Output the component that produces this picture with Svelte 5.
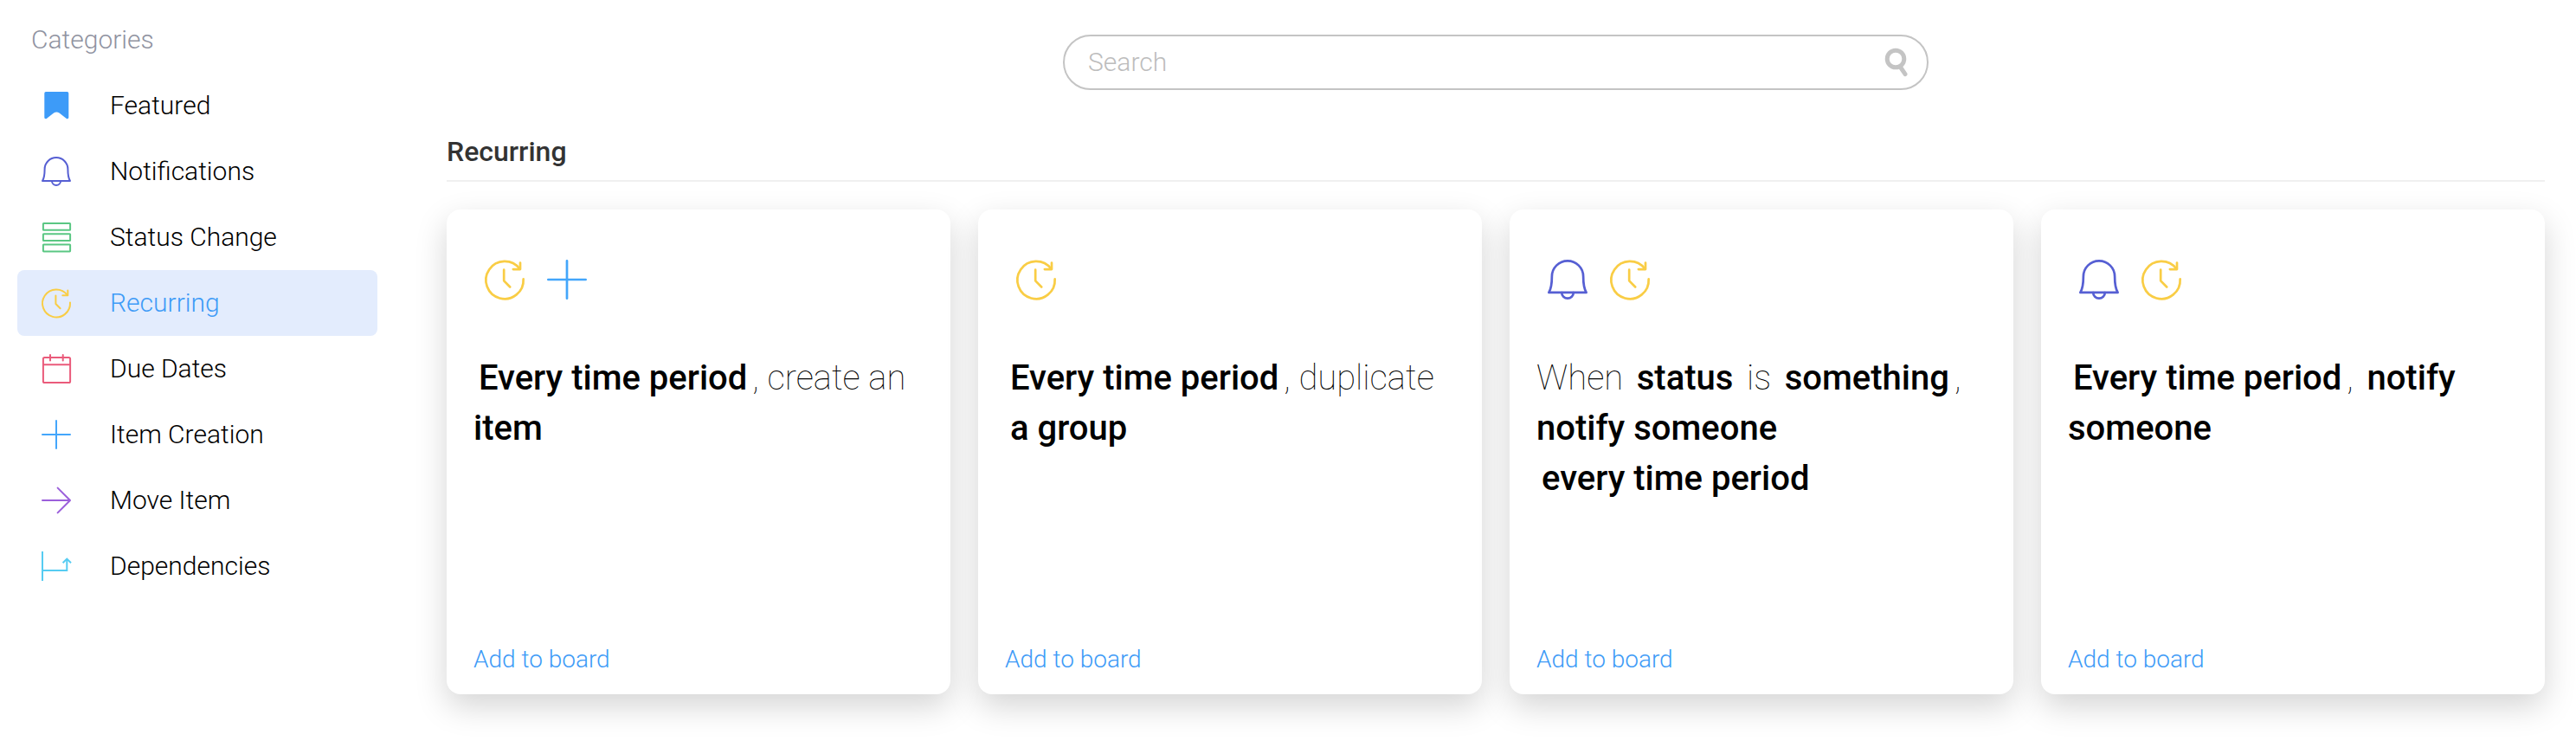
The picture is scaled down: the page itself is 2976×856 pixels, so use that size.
<script>
	let search = $state('');
	let selected = $state('Recurring');

	const categories = [
		{ label: 'Featured', icon: 'bookmark' },
		{ label: 'Notifications', icon: 'bell' },
		{ label: 'Status Change', icon: 'status' },
		{ label: 'Recurring', icon: 'clock' },
		{ label: 'Due Dates', icon: 'calendar' },
		{ label: 'Item Creation', icon: 'plus' },
		{ label: 'Move Item', icon: 'arrow' },
		{ label: 'Dependencies', icon: 'dependency' }
	];

	// flush keywords sit tight against the text before them
	const recipes = [
		{
			icons: ['clock', 'plus'],
			parts: [
				{ text: 'Every time period', key: true },
				{ text: ', create an ' },
				{ text: 'item', key: true, flush: true }
			]
		},
		{
			icons: ['clock'],
			parts: [
				{ text: 'Every time period', key: true },
				{ text: ', duplicate ' },
				{ text: 'a group', key: true }
			]
		},
		{
			icons: ['bell', 'clock'],
			parts: [
				{ text: 'When ' },
				{ text: 'status', key: true },
				{ text: ' is ' },
				{ text: 'something', key: true },
				{ text: ', ' },
				{ text: 'notify someone', key: true, flush: true },
				{ lineBreak: true },
				{ text: 'every time period', key: true }
			]
		},
		{
			icons: ['bell', 'clock'],
			parts: [
				{ text: 'Every time period', key: true },
				{ text: ', ' },
				{ text: 'notify someone', key: true }
			]
		}
	];
</script>

{#snippet icon(name)}
	<svg class="icon {name}" viewBox="0 0 34 34" aria-hidden="true">
		{#if name === 'bookmark'}
			<path d="M5 1H29.6Q31.3 1 31.3 2.7V30.6C31.3 32.3 29.8 32.8 28.5 31.7L20.5 25.6Q17.3 23.4 14.1 25.6L6.1 31.7C4.8 32.8 3.3 32.3 3.3 30.6V2.7Q3.3 1 5 1Z" />
		{:else if name === 'bell'}
			<path d="M1 28C2.8 25 3.6 20 3.6 14.4A13.4 13.4 0 0 1 30.4 14.4C30.4 20 31.2 25 33 28Z" />
			<path d="M12 28.2A5 4.8 0 0 0 22 28.2" />
		{:else if name === 'status'}
			<rect x="1.9" y="0.9" width="31.2" height="7.9" rx="0.6" />
			<rect x="1.9" y="13.2" width="31.2" height="7.9" rx="0.6" />
			<rect x="1.9" y="25.5" width="31.2" height="7.9" rx="0.6" />
		{:else if name === 'clock'}
			<path d="M33 16.5A16 16 0 1 1 29.8 7.8" />
			<path d="M30.3 2.6V8.2H24.3" />
			<path d="M16.4 8.6V18L21.6 23.3" />
		{:else if name === 'calendar'}
			<rect x="1.9" y="4.1" width="31.2" height="29" rx="1.6" />
			<path d="M2 12.2H33M10 1V7.4M24.7 1V7.4" />
		{:else if name === 'plus'}
			<path d="M17 1V33M1 17H33" />
		{:else if name === 'arrow'}
			<path d="M1 17H32.6M18.6 2.6L33 17L18.6 31.4" />
		{:else if name === 'dependency'}
			<path d="M1 0V34M1 22H29.3V8.6M24.6 13.2L29.3 8.6L34 13.2" />
		{/if}
	</svg>
{/snippet}

<div class="page">
	<nav class="sidebar" aria-label="Categories">
		<h2>Categories</h2>
		{#each categories as { label, icon: name }}
			<button
				class="category"
				class:selected={selected === label}
				onclick={() => (selected = label)}
			>
				{@render icon(name)}
				<span>{label}</span>
			</button>
		{/each}
	</nav>

	<main>
		<div class="search">
			<input type="text" placeholder="Search" aria-label="Search" bind:value={search} />
			<svg viewBox="0 0 28 34" aria-hidden="true">
				<circle cx="14" cy="13" r="9.8" />
				<path d="M19.5 22.5L25 30.6" />
			</svg>
		</div>

		<h1>{selected}</h1>

		<div class="cards">
			{#each recipes as { icons, parts }}
				<article class="card">
					<div class="icons">
						{#each icons as name}
							{@render icon(name)}
						{/each}
					</div>
					<p>{#each parts as part}{#if part.lineBreak}<br />{:else if part.key}<b class:flush={part.flush}>{part.text}</b>{:else}{part.text}{/if}{/each}</p>
					<a href="#add">Add to board</a>
				</article>
			{/each}
		</div>
	</main>
</div>

<style>
	:global(body) {
		background: #fff;
	}

	* {
		box-sizing: border-box;
	}

	.page {
		display: grid;
		grid-template-columns: 416px minmax(0, 1fr);
		gap: 80px;
		padding: 0 36px 54px 20px;
		font-family: Roboto, 'Liberation Sans', sans-serif;
		font-size: 30px;
		font-weight: 300;
		color: #000;
	}

	.sidebar {
		display: flex;
		flex-direction: column;
		padding-top: 26px;
	}
	.sidebar h2 {
		margin: 0 0 18px;
		padding-left: 16px;
		font-size: 30px;
		line-height: 40px;
		font-weight: 300;
		color: #9093a1;
	}

	.category {
		display: flex;
		align-items: center;
		gap: 45px;
		height: 76px;
		padding: 0 28px;
		border: none;
		border-radius: 8px;
		background: none;
		font: inherit;
		color: inherit;
		text-align: left;
		cursor: pointer;
	}
	.category span {
		padding-bottom: 2px;
	}
	.category.selected {
		background: #e3ecfd;
		color: #3e9bf7;
	}

	.icon {
		flex: none;
		width: 34px;
		height: 34px;
		fill: none;
		stroke: currentColor;
		stroke-width: 2;
		stroke-linecap: round;
		stroke-linejoin: round;
		overflow: visible;
	}
	.bookmark {
		fill: #3d9bf8;
		stroke: none;
	}
	.bell {
		color: #565fd3;
	}
	.status {
		color: #5ac783;
	}
	.clock {
		color: #f9cd45;
	}
	.calendar {
		color: #ea5b7b;
	}
	.plus {
		color: #43a6fb;
	}
	.arrow {
		color: #9b5fdb;
	}
	.dependency {
		color: #56ccf2;
		stroke-linecap: butt;
		stroke-linejoin: miter;
	}

	main {
		padding-top: 40px;
	}

	.search {
		display: flex;
		align-items: center;
		width: 100%;
		max-width: 1000px;
		height: 64px;
		margin: 0 auto;
		padding: 0 22px 0 27px;
		border: 2px solid #c4c4c4;
		border-radius: 32px;
	}
	.search input {
		flex: 1;
		min-width: 0;
		padding: 0 0 2px;
		border: none;
		outline: none;
		background: none;
		font: inherit;
		color: #333;
	}
	.search input::placeholder {
		color: #bdbdbd;
		opacity: 1;
	}
	.search svg {
		width: 28px;
		height: 34px;
		fill: none;
		stroke: #c4c4c4;
		stroke-width: 5;
		stroke-linecap: round;
	}

	h1 {
		margin: 51px 0 32px;
		padding-bottom: 13px;
		border-bottom: 2px solid #f0f0f0;
		font-size: 32px;
		line-height: 40px;
		font-weight: 500;
		color: #333;
	}

	.cards {
		display: grid;
		grid-template-columns: repeat(4, minmax(0, 1fr));
		gap: 32px;
	}

	.card {
		display: flex;
		flex-direction: column;
		align-items: flex-start;
		min-height: 560px;
		padding: 58px 28px 20px 31px;
		border-radius: 16px;
		background: #fff;
		box-shadow: 0 14px 36px rgba(0, 0, 0, 0.17);
	}
	.card p {
		margin: 62px 0 0;
		font-size: 40px;
		line-height: 58px;
		font-weight: 100;
	}
	.card b {
		margin: 0 6px;
		font-weight: 500;
	}
	.card b.flush {
		margin-left: 0;
	}
	.card a {
		margin-top: auto;
		font-size: 28px;
		line-height: 40px;
		color: #3e9bf7;
		text-decoration: none;
	}

	.icons {
		display: flex;
		gap: 26px;
		padding-left: 13px;
	}
	.icons .icon {
		width: 46px;
		height: 46px;
	}
</style>
